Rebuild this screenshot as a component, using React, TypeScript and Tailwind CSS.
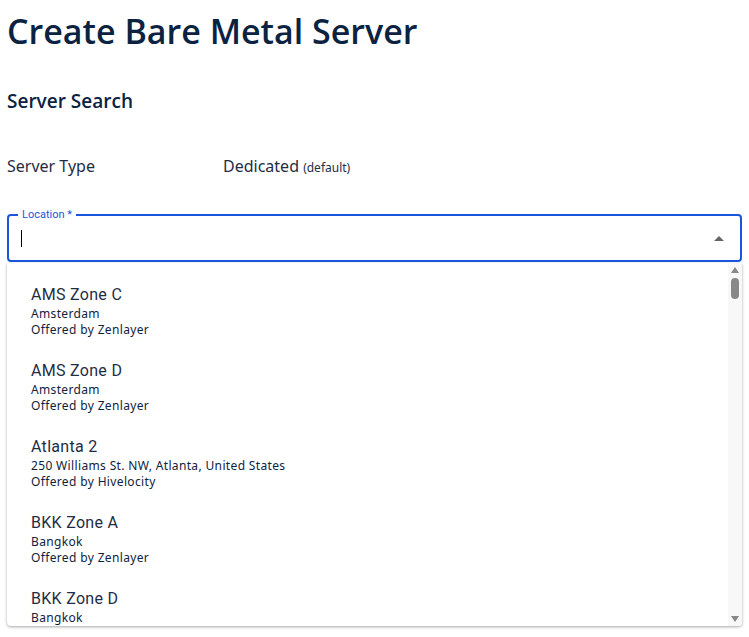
import React from "react";

const items = [
  ["AMS Zone C", "Amsterdam", "Zenlayer"],
  ["AMS Zone D", "Amsterdam", "Zenlayer"],
  ["Atlanta 2", "250 Williams St. NW, Atlanta, United States", "Hivelocity"],
  ["BKK Zone A", "Bangkok", "Zenlayer"],
  ["BKK Zone D", "Bangkok", "Zenlayer"],
];

export default function App() {
  return (
    <div className="w-[749px] h-[637px] overflow-hidden bg-white text-[#0f2340]" style={{ fontFamily: "'Noto Sans', sans-serif" }}>
      <div className="px-[7px]">
        <h1 className="text-[34px] leading-[40px] pt-[11px] text-[#0b2341]" style={{ fontFamily: "'Open Sans', sans-serif", fontWeight: 600, letterSpacing: "0px" }}>Create Bare Metal Server</h1>
        <h2 className="text-[19px] mt-[38px] leading-[24px] text-[#0b2341]" style={{ fontFamily: "'Open Sans', sans-serif", fontWeight: 600 }}>Server Search</h2>
        <div className="flex mt-[43px] text-[16px] leading-[20px] text-[#1f2d45]">
          <div className="w-[216px]">Server Type</div>
          <div>Dedicated <span className="text-[12px]">(default)</span></div>
        </div>
        <div className="relative mt-[36px] h-[48px] border-2 border-[#1a56db] rounded-[4px] flex items-center pl-[12px] pr-[16px]">
          <span className="absolute -top-[9px] left-[9px] bg-white px-[4px] text-[11px] text-[#1a56db] leading-[16px]" style={{ fontFamily: "Roboto, sans-serif" }}>Location *</span>
          <div className="w-[1px] h-[17px] bg-black" />
          <div className="ml-auto w-0 h-0 border-l-[5px] border-r-[5px] border-b-[5px] border-l-transparent border-r-transparent border-b-[#666]" />
        </div>
        <div className="mt-[1px] flex h-[363px] rounded-b-[4px] shadow-[0_1px_3px_rgba(0,0,0,0.35)] overflow-hidden">
          <div className="flex-1 pt-[22px] pl-[24px]">
            {items.map(([t, s, o]) => (
              <div key={t} className="h-[76px]">
                <div className="text-[16px] leading-[20px] text-[#1f2d45]" style={{ fontFamily: "Roboto, sans-serif", letterSpacing: "0.3px" }}>{t}</div>
                <div className="text-[12px] leading-[16px] mt-[1px]" style={{ letterSpacing: "0.35px" }}>{s}</div>
                <div className="text-[12px] leading-[16px]" style={{ letterSpacing: "0.35px" }}>Offered by {o}</div>
              </div>
            ))}
          </div>
          <div className="w-[14px] bg-[#f8f8f8] flex flex-col items-center pt-[4px]">
            <div className="w-0 h-0 border-l-[4px] border-r-[4px] border-b-[6px] border-l-transparent border-r-transparent border-b-[#888]" />
            <div className="w-[8px] h-[21px] rounded-full bg-[#888] mt-[5px]" />
            <div className="mt-auto mb-[4px] w-0 h-0 border-l-[4px] border-r-[4px] border-t-[6px] border-l-transparent border-r-transparent border-t-[#888]" />
          </div>
        </div>
      </div>
    </div>
  );
}
